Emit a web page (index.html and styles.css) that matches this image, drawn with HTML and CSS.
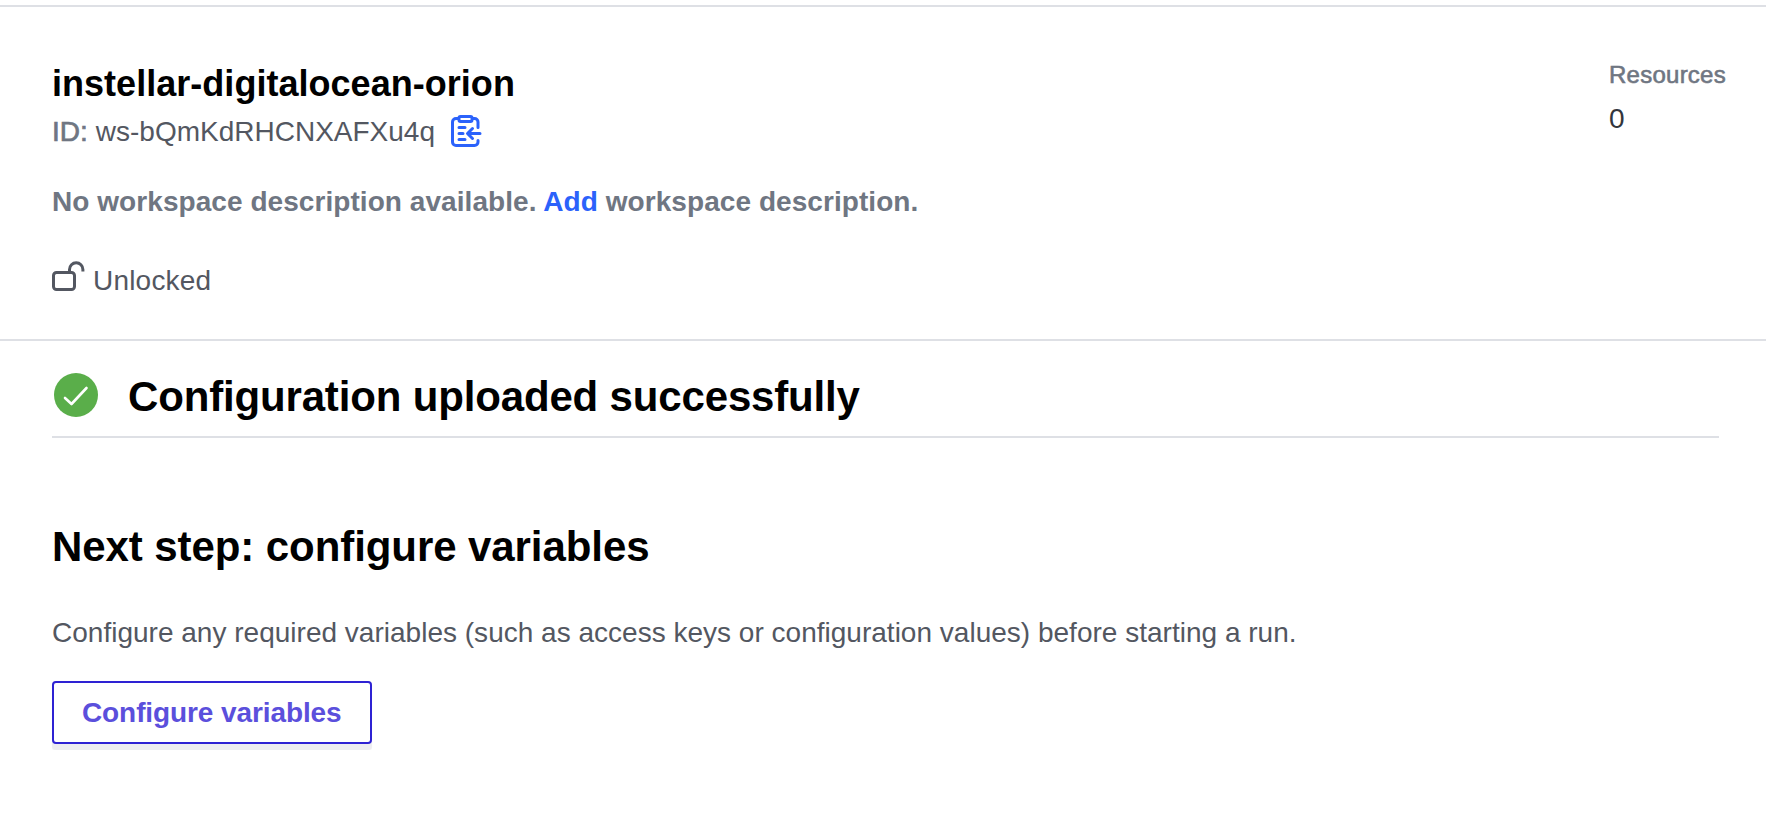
FILE: index.html
```html
<!DOCTYPE html>
<html lang="en">
<head>
<meta charset="utf-8">
<title>instellar-digitalocean-orion</title>
<link rel="stylesheet" href="styles.css">
</head>
<body>
<header class="workspace">
  <div class="workspace-main">
    <h1 class="workspace-title">instellar-digitalocean-orion</h1>
    <div class="workspace-id">
      <span class="id-label">ID:</span>
      <span class="id-value">ws-bQmKdRHCNXAFXu4q</span>
      <svg class="icon-copy" viewBox="0 0 32 34" width="32" height="34" fill="none" stroke="#2b62fb" stroke-width="3" stroke-linecap="round" stroke-linejoin="round">
        <path d="M8.5 4.5H6A3.5 3.5 0 0 0 2.500 8v20A3.500 3.500 0 0 0 6 31.500h18.500a3.500 3.500 0 0 0 3.500-3.500v-1.500M22.500 4.500H24.500A3.500 3.500 0 0 1 28 8v5.500"/>
        <rect x="9" y="2.500" width="13" height="5" rx="1.500"/>
        <path d="M9 13.500h6M9 19.500h4M9 25.500h6M22.500 14.500l-5 5 5 5M18 19.500h12"/>
      </svg>
    </div>
    <p class="workspace-description">No workspace description available. <a class="add-link">Add</a> workspace description.</p>
    <div class="lock-status">
      <svg class="icon-lock" viewBox="0 0 33 32" width="33" height="32" fill="none" stroke="#535761" stroke-width="3" stroke-linecap="round">
        <rect x="1.500" y="11.500" width="21" height="17" rx="3"/>
        <path stroke-linecap="butt" d="M17.500 11.500V8.500a6.700 6.700 0 0 1 13.400 0V10.500"/>
      </svg>
      <span class="lock-text">Unlocked</span>
    </div>
  </div>
  <dl class="resources">
    <dt class="resources-label">Resources</dt>
    <dd class="resources-value">0</dd>
  </dl>
</header>
<main class="content">
  <div class="status">
    <svg class="icon-success" viewBox="0 0 44 44" width="44" height="44">
      <circle cx="22" cy="22" r="22" fill="#5aae4a"/>
      <path d="M11 25l6.500 6 15-16" fill="none" stroke="#fff" stroke-width="2.600" stroke-linecap="round" stroke-linejoin="round"/>
    </svg>
    <h2 class="heading status-heading">Configuration uploaded successfully</h2>
  </div>
  <h2 class="heading next-heading">Next step: configure variables</h2>
  <p class="next-text">Configure any required variables (such as access keys or configuration values) before starting a run.</p>
  <div class="button-shell">
    <button class="configure-button" type="button">Configure variables</button>
  </div>
</main>
</body>
</html>
```
FILE: styles.css
```css
* { box-sizing: border-box; }
body {
  margin: 0;
  padding-top: 5px;
  background: #fff;
  color: #535761;
  font: 28px/42px "Liberation Sans", Arial, sans-serif;
}
h1, h2, p, dl, dd { margin: 0; }
.workspace {
  display: flex;
  justify-content: space-between;
  height: 336px;
  padding: 55px 40px 0 52px;
  border-top: 2px solid #dee0e5;
  border-bottom: 2px solid #dee0e5;
}
.workspace-title {
  color: #000;
  font-size: 36px;
  line-height: 44px;
  letter-spacing: 0.03px;
}
.workspace-id {
  display: flex;
  margin-top: 5px;
}
.id-label {
  color: #6f7682;
  margin-right: 8px;
  -webkit-text-stroke: 0.7px #6f7682;
}
.icon-copy { margin: 3px 0 0 15px; }
.workspace-description {
  margin-top: 28px;
  color: #6f7682;
  font-weight: bold;
  letter-spacing: 0.06px;
}
.add-link { color: #2b62fb; }
.lock-status {
  display: flex;
  margin-top: 37px;
}
.icon-lock { margin: 1px 8px 0 0; }
.lock-text { letter-spacing: 0.2px; }
.resources { width: 117px; }
.resources-label {
  margin-top: -3px;
  color: #6f7682;
  font-size: 24px;
  line-height: 32px;
  letter-spacing: 0.25px;
  -webkit-text-stroke: 0.6px #6f7682;
}
.resources-value {
  margin-top: 7px;
  color: #33363c;
}
.content { padding: 26px 47px 0 52px; }
.status {
  display: flex;
  height: 71px;
  border-bottom: 2px solid #dee0e5;
}
.icon-success { margin: 6px 30px 0 2px; }
.heading {
  color: #000;
  font-size: 42px;
  line-height: 54px;
}
.status-heading {
  margin-top: 3px;
  letter-spacing: -0.16px;
}
.next-heading {
  margin-top: 82px;
  letter-spacing: -0.08px;
}
.next-text {
  margin-top: 38px;
  letter-spacing: 0.01px;
}
.button-shell {
  width: 320px;
  height: 69px;
  margin-top: 27px;
  border-radius: 4px;
  background: #ededf0;
  box-shadow: 0 1px 1px #f4f4f6;
}
.configure-button {
  display: block;
  width: 320px;
  height: 63px;
  padding: 0 0 0 28px;
  border: 2px solid #2e22d3;
  border-radius: 4px;
  background: #fff;
  color: #5b4fdc;
  font: bold 28px/42px "Liberation Sans", Arial, sans-serif;
  letter-spacing: -0.1px;
  text-align: left;
}
```
